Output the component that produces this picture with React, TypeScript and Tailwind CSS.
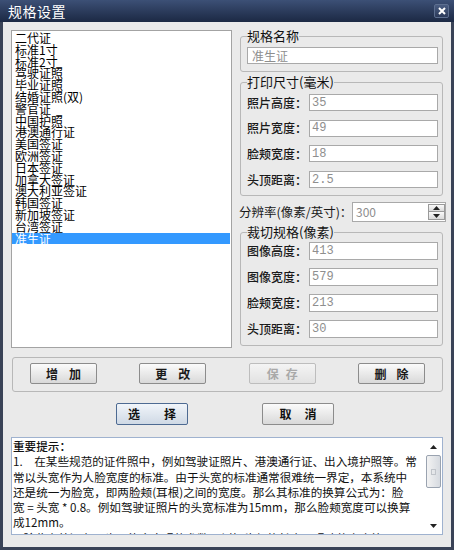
import React from "react";

const items = [
  "二代证",
  "标准1寸",
  "标准2寸",
  "驾驶证照",
  "毕业证照",
  "结婚证照(双)",
  "警官证",
  "中国护照",
  "港澳通行证",
  "美国签证",
  "欧洲签证",
  "日本签证",
  "加拿大签证",
  "澳大利亚签证",
  "韩国签证",
  "新加坡签证",
  "台湾签证",
  "准生证",
];

function Field({ value, h }: { value: string; h: string }) {
  return (
    <div
      className={`${h} flex-1 flex items-center border border-[#a9a9a9] bg-white pl-[2px] text-[12px] text-[#8e8e8e] font-['Liberation_Mono',monospace]`}
    >
      {value}
    </div>
  );
}

function Row({ label, value, h }: { label: string; value: string; h: string }) {
  return (
    <div className={`flex items-center ${h}`}>
      <span className="w-[62px] shrink-0 text-[12px] leading-[14px] font-medium text-[#1a1a1a] whitespace-nowrap">{label}</span>
      <Field value={value} h={h} />
    </div>
  );
}

function Btn({ a, b, gap, disabled }: { a: string; b: string; gap: string; disabled?: boolean }) {
  return (
    <div
      className={`w-[67px] h-[21px] flex items-center justify-center ${gap} rounded-[2px] border text-[12px] font-bold ${
        disabled
          ? "border-[#bdbdbd] text-[#a9a9a9] bg-linear-to-b from-[#f4f4f4] to-[#e2e2e2]"
          : "border-[#8c8c8c] text-[#1a1a1a] bg-linear-to-b from-[#fbfbfb] to-[#d9d9d9]"
      }`}
    >
      <span>{a}</span>
      <span>{b}</span>
    </div>
  );
}

function Arrow({ up }: { up?: boolean }) {
  return (
    <svg width="7" height="4" viewBox="0 0 7 4">
      {up ? <path d="M0 4 L3.5 0 L7 4 Z" fill="#222" /> : <path d="M0 0 L3.5 4 L7 0 Z" fill="#222" />}
    </svg>
  );
}

const lines = [
  "1.　在某些规范的证件照中，例如驾驶证照片、港澳通行证、出入境护照等。常",
  "常以头宽作为人脸宽度的标准。由于头宽的标准通常很难统一界定，本系统中",
  "还是统一为脸宽，即两脸颊(耳根)之间的宽度。那么其标准的换算公式为：脸",
  "宽 = 头宽 * 0.8。例如驾驶证照片的头宽标准为15mm，那么脸颊宽度可以换算",
  "成12mm。",
  "    除此之外还有，也可能会出现的参数，例如头部的长度、眼睛的高度等",
];

export default function App() {
  return (
    <div className="w-[454px] h-[550px] flex flex-col overflow-hidden bg-[#3a4357] font-['Noto_Sans_CJK_SC',sans-serif]">
      {/* title bar */}
      <div className="h-[22px] shrink-0 flex items-center justify-between bg-linear-to-b from-[#3c5076] to-[#1c2944] pl-[8px] pr-[5px]">
        <span className="text-[14px] leading-[16px] text-white tracking-[0.5px]">规格设置</span>
        <div className="w-[15px] h-[14px] flex items-center justify-center rounded-[2px] border border-[#5d6f90] bg-linear-to-b from-[#4a5d82] to-[#2b3a5a]">
          <svg width="8" height="8" viewBox="0 0 8 8">
            <path d="M1 1 L7 7 M7 1 L1 7" stroke="#fff" strokeWidth="2" />
          </svg>
        </div>
      </div>

      {/* body */}
      <div className="flex-1 mx-[3px] mb-[3px] bg-[#eaeaea] flex flex-col px-[8px] pt-[8px]">
        <div className="flex h-[318px] gap-[7px]">
          {/* list */}
          <div className="w-[221px] shrink-0 h-[318px] border border-[#a3a3a3] bg-white pt-[1px] text-[12px] leading-[11.8px] text-black overflow-hidden">
            {items.map((it, i) =>
              i === items.length - 1 ? (
                <div key={it} className="h-[11.8px] bg-[#3399ff] text-white pl-[3px] mr-[1px] whitespace-nowrap">
                  {it}
                </div>
              ) : (
                <div key={it} className="h-[11.8px] pl-[3px] whitespace-nowrap">
                  {it}
                </div>
              )
            )}
          </div>

          {/* right column */}
          <div className="w-[207px] shrink-0 flex flex-col -mt-[1px]">
            <fieldset className="ml-[1px] w-[203px] border border-[#b8b8b8] rounded-[3px] pl-[6px] pr-[4px] pt-[4px] pb-[7px]">
              <legend className="text-[13px] leading-[14px] text-[#111]">规格名称</legend>
              <div className="h-[17px] flex items-center border border-[#a9a9a9] bg-white pl-[4px] text-[12px] text-[#8e8e8e]">
                准生证
              </div>
            </fieldset>

            <fieldset className="mt-[3px] ml-[1px] w-[203px] border border-[#b8b8b8] rounded-[3px] pl-[6px] pr-[4px] pt-[5px] pb-[7px]">
              <legend className="text-[13px] leading-[14px] text-[#111]">打印尺寸(毫米)</legend>
              <div className="flex flex-col gap-[8.7px]">
                <Row label="照片高度：" value="35" h="h-[17px]" />
                <Row label="照片宽度：" value="49" h="h-[17px]" />
                <Row label="脸颊宽度：" value="18" h="h-[17px]" />
                <Row label="头顶距离：" value="2.5" h="h-[17px]" />
              </div>
            </fieldset>

            <div className="mt-[6px] h-[20px] flex items-center">
              <span className="w-[113px] shrink-0 text-[12.5px] leading-[14px] text-[#1a1a1a] whitespace-nowrap">分辨率(像素/英寸)：</span>
              <div className="w-[94px] h-[20px] flex items-center border border-[#a9a9a9] bg-white">
                <span className="flex-1 pl-[3px] text-[12px] text-[#8e8e8e]">300</span>
                <div className="w-[17px] h-[16px] flex flex-col">
                  <div className="h-[8px] flex items-center justify-center border border-[#9a9a9a] bg-linear-to-b from-[#fafafa] to-[#dadada]">
                    <Arrow up />
                  </div>
                  <div className="h-[8px] flex items-center justify-center border border-t-0 border-[#9a9a9a] bg-linear-to-b from-[#fafafa] to-[#dadada]">
                    <Arrow />
                  </div>
                </div>
              </div>
            </div>

            <fieldset className="mt-[3px] ml-[1px] w-[203px] border border-[#b8b8b8] rounded-[3px] pl-[6px] pr-[4px] pt-[3px] pb-[7px]">
              <legend className="text-[13px] leading-[14px] text-[#111]">裁切规格(像素)</legend>
              <div className="flex flex-col gap-[8px]">
                <Row label="图像高度：" value="413" h="h-[18px]" />
                <Row label="图像宽度：" value="579" h="h-[18px]" />
                <Row label="脸颊宽度：" value="213" h="h-[18px]" />
                <Row label="头顶距离：" value="30" h="h-[18px]" />
              </div>
            </fieldset>
          </div>
        </div>

        {/* edit buttons */}
        <div className="mt-[9px] ml-[1px] w-[431px] h-[35px] border border-[#b8b8b8] rounded-[3px] flex justify-between px-[17px] pt-[5px]">
          <Btn a="增" b="加" gap="gap-[11px]" />
          <Btn a="更" b="改" gap="gap-[11px]" />
          <Btn a="保" b="存" gap="gap-[7px]" disabled />
          <Btn a="删" b="除" gap="gap-[10px]" />
        </div>

        {/* select / cancel */}
        <div className="mt-[11px] flex pl-[105px] gap-[74px]">
          <div className="w-[72px] h-[22px] flex items-center justify-center gap-[24px] rounded-[2px] border border-[#4d6a92] bg-linear-to-b from-[#f1f5fa] to-[#cfd9e5] text-[12px] font-bold text-[#111]">
            <span>选</span>
            <span>择</span>
          </div>
          <div className="w-[72px] h-[22px] flex items-center justify-center gap-[13px] rounded-[2px] border border-[#8c8c8c] bg-linear-to-b from-[#fbfbfb] to-[#d9d9d9] text-[12px] font-bold text-[#111]">
            <span>取</span>
            <span>消</span>
          </div>
        </div>

        {/* tips */}
        <div className="mt-[12px] w-[432px] h-[98px] border border-[#9fb2cf] bg-white flex overflow-hidden">
          <div className="flex-1 pl-[1px] pt-[1px] text-[11.6px] leading-[15.3px] text-[#111] overflow-hidden">
            <div className="whitespace-pre font-medium">重要提示：</div>
            {lines.map((l, i) => (
              <div key={i} className="whitespace-pre">
                {l}
              </div>
            ))}
          </div>
          <div className="w-[17px] shrink-0 flex flex-col items-stretch">
            <div className="h-[17px] flex items-center justify-center">
              <Arrow up />
            </div>
            <div className="h-[33px] mx-[1px] rounded-[2px] border border-[#9aa3b0] bg-linear-to-r from-[#f3f3f3] to-[#d6dae0] flex items-center justify-center">
              <div className="w-[5px] h-[6px] border border-[#c0c4ca]" />
            </div>
            <div className="flex-1" />
            <div className="h-[17px] flex items-center justify-center">
              <Arrow />
            </div>
          </div>
        </div>
      </div>
    </div>
  );
}
